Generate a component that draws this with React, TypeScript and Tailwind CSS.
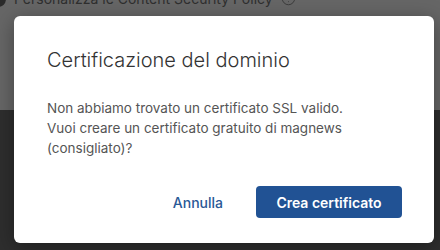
import { CircleHelp } from 'lucide-react';

export default function App() {
  return (
    <div className="relative w-[440px] h-[250px] overflow-hidden font-['Inter',sans-serif]">
      <div className="flex flex-col h-full">
        <div className="h-[110px] bg-[#666666]">
          <div className="flex items-center gap-[8px] -mt-[12px] -ml-[12px]">
            <div className="w-[18px] h-[16px] rounded-full bg-[#2a2a2a]" />
            <span className="text-[14px] text-[#2f2f2f]">Personalizza le Content Security Policy</span>
            <CircleHelp className="w-[15px] h-[15px] text-[#3a3a3a]" strokeWidth={1.5} />
          </div>
        </div>
        <div className="flex-1 bg-[#2e2e2e]" />
      </div>

      <div className="absolute left-[14px] top-[16px] w-[420px] h-[227px] bg-white rounded-[6px] shadow-[0_4px_20px_rgba(0,0,0,0.35)] flex flex-col px-[33px] pt-[30px]">
        <h2 className="text-[20px] leading-[28px] font-[350] text-[#333]">Certificazione del dominio</h2>
        <p className="mt-[24px] text-[13.5px] leading-[20px] text-[#555]">
          Non abbiamo trovato un certificato SSL valido.
          <br />
          Vuoi creare un certificato gratuito di magnews (consigliato)?
        </p>
        <div className="mt-auto mb-[25px] flex items-center justify-end gap-[33px] -mr-[1px]">
          <button className="text-[14px] font-medium text-[#2a5896]">Annulla</button>
          <button className="w-[146px] h-[32px] rounded-[4px] bg-[#215294] text-white text-[14px] font-semibold">
            Crea certificato
          </button>
        </div>
      </div>
    </div>
  );
}
